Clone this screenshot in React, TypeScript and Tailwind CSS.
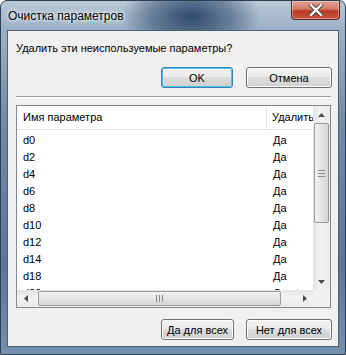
import React from "react";

const rows = ["d0", "d2", "d4", "d6", "d8", "d10", "d12", "d14", "d18", "d20"];

const WinButton = ({ text, focused }: { text: string; focused?: boolean }) => (
    <button
        className={`w-full h-[21px] rounded-[3px] border text-[11px] leading-[14px] text-black bg-[linear-gradient(#f2f2f2_0%,#ebebeb_45%,#dddddd_50%,#cfcfcf_100%)] ${
            focused
                ? "border-[#3c7fb1] shadow-[inset_0_0_0_1px_#49c6ef]"
                : "border-[#707070] shadow-[inset_0_0_0_1px_#fcfcfc]"
        }`}
    >
        {text}
    </button>
);

const Arrow = ({ dir }: { dir: "up" | "down" | "left" | "right" }) => {
    const pts = {
        up: "0,4 3.5,0 7,4",
        down: "0,0 3.5,4 7,0",
        left: "4,0 0,3.5 4,7",
        right: "0,0 4,3.5 0,7",
    }[dir];
    const w = dir === "up" || dir === "down" ? 7 : 4;
    const h = dir === "up" || dir === "down" ? 4 : 7;
    return (
        <svg width={w} height={h} viewBox={`0 0 ${w} ${h}`}>
            <polygon points={pts} fill="#4d4d4d" />
        </svg>
    );
};

const App = () => {
    return (
        <div
            className="w-[346px] h-[355px] flex flex-col rounded-t-[7px] border border-[#2e3f52] bg-[linear-gradient(180deg,#b9c8d7_0%,#9bb0c6_8%,#6f8ba8_35%,#58779a_75%,#7490ad_100%)] overflow-hidden"
            style={{ fontFamily: '"Liberation Sans", Arial, sans-serif' }}
        >
            {/* title bar */}
            <div className="relative h-[29px] flex items-start bg-[radial-gradient(ellipse_70px_40px_at_190px_16px,#2f4c6b_0%,rgba(47,76,107,0.5)_60%,rgba(0,0,0,0)_100%)]">
                <span className="pl-[7px] pt-[7px] text-[12px] leading-[16px] text-black [text-shadow:0_0_6px_#ffffff,0_0_3px_#ffffff]">
                    Очистка параметров
                </span>
                <div className="ml-auto mr-[5px] w-[49px] h-[19px] rounded-b-[4px] border border-t-0 border-[#5a2b2b] bg-[linear-gradient(180deg,#e0a493_0%,#d37b68_45%,#b93a26_55%,#c8553c_100%)] flex items-center justify-center shadow-[inset_0_0_0_1px_rgba(255,255,255,0.35)]">
                    <svg width="14" height="12" viewBox="0 0 14 12">
                        <path
                            d="M2 1 L12 11 M12 1 L2 11"
                            stroke="#3d3d3d"
                            strokeWidth="4.2"
                            strokeLinecap="square"
                        />
                        <path
                            d="M2 1 L12 11 M12 1 L2 11"
                            stroke="#ffffff"
                            strokeWidth="2.4"
                            strokeLinecap="square"
                        />
                    </svg>
                </div>
            </div>

            {/* client area */}
            <div className="mx-[6px] mb-[7px] flex-1 border border-[#4c5f74] bg-[#f0f0f0] flex flex-col pl-[8px] pr-[6px] text-[11px] text-black">
                <p className="pt-[9px] leading-[16px]">
                    Удалить эти неиспользуемые параметры?
                </p>
                <div className="mt-[11px] flex justify-end gap-[13px]">
                    <div className="w-[72px]">
                        <WinButton text="OK" focused />
                    </div>
                    <div className="w-[86px]">
                        <WinButton text="Отмена" />
                    </div>
                </div>
                <div className="mt-[8px] mr-[1px] border-t border-b border-t-[#a0a0a0] border-b-[#ffffff] h-[2px]" />

                {/* list */}
                <div className="mt-[7px] mr-[1px] h-[203px] border border-[#828790] bg-white flex flex-col">
                    <div className="flex flex-1 min-h-0">
                        <div className="flex-1 min-w-0 overflow-hidden flex flex-col">
                            <div className="h-[24px] shrink-0 flex border-b border-[#e5e5e5]">
                                <div className="w-[250px] shrink-0 pl-[6px] flex items-center border-r border-[#e5e5e5]">
                                    Имя параметра
                                </div>
                                <div className="pl-[5px] flex items-center whitespace-nowrap">
                                    Удалить
                                </div>
                            </div>
                            <div className="pt-[2px] flex flex-col">
                                {rows.map((r) => (
                                    <div key={r} className="h-[17px] shrink-0 flex items-center">
                                        <span className="w-[256px] shrink-0 pl-[6px]">{r}</span>
                                        <span>Да</span>
                                    </div>
                                ))}
                            </div>
                        </div>
                        {/* vertical scrollbar */}
                        <div className="w-[17px] shrink-0 flex flex-col bg-[linear-gradient(90deg,#e3e3e3,#f2f2f2_40%,#eaeaea)]">
                            <div className="h-[17px] flex items-center justify-center">
                                <Arrow dir="up" />
                            </div>
                            <div className="mx-[1px] h-[100px] rounded-[2px] border border-[#9a9a9a] bg-[linear-gradient(90deg,#f1f1f1,#e4e4e4_50%,#d5d5d5)] flex items-center justify-center">
                                <div className="flex flex-col gap-[2px]">
                                    <div className="w-[7px] h-[1px] bg-[#8a8a8a]" />
                                    <div className="w-[7px] h-[1px] bg-[#8a8a8a]" />
                                    <div className="w-[7px] h-[1px] bg-[#8a8a8a]" />
                                </div>
                            </div>
                            <div className="flex-1" />
                            <div className="h-[17px] flex items-center justify-center">
                                <Arrow dir="down" />
                            </div>
                        </div>
                    </div>
                    {/* horizontal scrollbar */}
                    <div className="h-[17px] shrink-0 flex">
                        <div className="flex-1 flex items-center bg-[linear-gradient(180deg,#e3e3e3,#f2f2f2_40%,#eaeaea)]">
                            <div className="w-[17px] flex items-center justify-center">
                                <Arrow dir="left" />
                            </div>
                            <div className="ml-[4px] w-[243px] h-[15px] rounded-[2px] border border-[#9a9a9a] bg-[linear-gradient(180deg,#f1f1f1,#e4e4e4_50%,#d5d5d5)] flex items-center justify-center">
                                <div className="flex gap-[2px]">
                                    <div className="w-[1px] h-[7px] bg-[#8a8a8a]" />
                                    <div className="w-[1px] h-[7px] bg-[#8a8a8a]" />
                                    <div className="w-[1px] h-[7px] bg-[#8a8a8a]" />
                                </div>
                            </div>
                            <div className="flex-1" />
                            <div className="w-[17px] flex items-center justify-center">
                                <Arrow dir="right" />
                            </div>
                        </div>
                        <div className="w-[17px] bg-[#f0f0f0]" />
                    </div>
                </div>

                <div className="mt-[11px] flex justify-end gap-[12px]">
                    <div className="w-[73px]">
                        <WinButton text="Да для всех" />
                    </div>
                    <div className="w-[86px]">
                        <WinButton text="Нет для всех" />
                    </div>
                </div>
            </div>
        </div>
    );
};

export default App;
